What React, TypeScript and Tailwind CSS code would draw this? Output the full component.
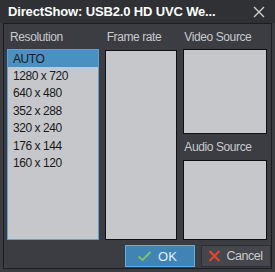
import React from "react";

const items = ["AUTO", "1280 x 720", "640 x 480", "352 x 288", "320 x 240", "176 x 144", "160 x 120"];

export default function App() {
  return (
    <div
      className="w-[275px] h-[272px] bg-[#3a3c40] flex flex-col overflow-hidden"
      style={{ fontFamily: '"Liberation Sans", Arial, sans-serif' }}
    >
      <div className="h-[23px] shrink-0 flex items-center justify-between pl-[8px] pr-[10px] bg-[#2f3134]">
        <span className="text-[13px] font-bold text-white leading-none tracking-[-0.15px]">DirectShow: USB2.0 HD UVC We...</span>
        <svg width="12" height="12" viewBox="0 0 12 12" className="mt-[1px]">
          <path d="M1 1 L11 11 M11 1 L1 11" stroke="#d0d0d0" strokeWidth="1.4" />
        </svg>
      </div>
      <div className="ml-[3px] mr-[3px] h-[246px] border border-[#1c1d20] bg-[#3b3d42] flex flex-col">
        <div className="flex pl-[3px] pr-[4px] gap-[6px]">
          <div className="w-[92px] flex flex-col">
            <div className="h-[25px] flex items-center pl-[3px] text-[12px] tracking-[-0.4px] text-[#c9cacd]">Resolution</div>
            <div className="h-[191px] border border-[#5aa3d8] bg-[#c6c7cb] flex flex-col">
              {items.map((t, i) => (
                <div
                  key={t}
                  className={`h-[17.4px] flex items-center pl-[5px] text-[12px] tracking-[-0.45px] text-[#1a1a1a] ${i === 0 ? "bg-[#4a90c0]" : ""}`}
                >
                  {t}
                </div>
              ))}
            </div>
          </div>
          <div className="w-[73px] flex flex-col">
            <div className="h-[26px] flex items-center pl-[2px] text-[12px] tracking-[-0.4px] text-[#c9cacd]">Frame rate</div>
            <div className="h-[190px] border border-[#111] bg-[#c6c7cb]" />
          </div>
          <div className="w-[84px] flex flex-col">
            <div className="h-[25px] flex items-center pl-[1px] text-[12px] tracking-[-0.4px] text-[#c9cacd]">Video Source</div>
            <div className="h-[85px] border border-[#111] bg-[#c6c7cb]" />
            <div className="h-[26px] flex items-center pl-[1px] text-[12px] tracking-[-0.4px] text-[#c9cacd]">Audio Source</div>
            <div className="h-[80px] border border-[#111] bg-[#c6c7cb]" />
          </div>
        </div>
        <div className="flex justify-end gap-[6px] mt-[5px]">
          <div className="w-[70px] h-[22px] bg-[#3f84b5] border border-[#5fb0e8] flex items-center justify-center gap-[6px] pr-[6px]">
            <svg width="15" height="11" viewBox="0 0 15 11">
              <path d="M1.5 5.5 L5.5 9 L13.5 1" stroke="#7ac36a" strokeWidth="2" fill="none" />
            </svg>
            <span className="text-[13px] text-[#e8eef4] leading-none">OK</span>
          </div>
          <div className="w-[70px] h-[22px] bg-[#45474c] border border-[#2c2e31] flex items-center justify-center gap-[6px] pr-[2px]">
            <svg width="13" height="12" viewBox="0 0 13 12">
              <path d="M1.5 1 L11.5 11 M11.5 1 L1.5 11" stroke="#e0452d" strokeWidth="2.2" />
            </svg>
            <span className="text-[12.5px] tracking-[-0.5px] text-[#c9cacd] leading-none">Cancel</span>
          </div>
        </div>
      </div>
    </div>
  );
}
